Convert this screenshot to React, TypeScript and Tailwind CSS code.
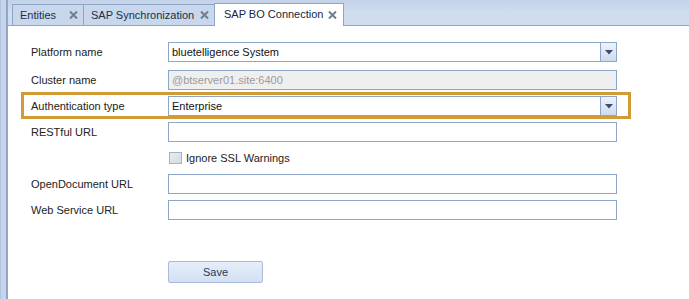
import * as React from "react";

function CloseIcon() {
  return (
    <svg width="9" height="8" viewBox="0 0 9 8" className="shrink-0">
      <path d="M1 0.5 L8 7.5 M8 0.5 L1 7.5" stroke="#6f7c91" strokeWidth="2" />
    </svg>
  );
}

function Tab({ label, width, active }: { label: string; width: string; active?: boolean }) {
  return (
    <div
      className={
        active
          ? `${width} h-[23px] -mb-px flex items-center justify-between pl-[9px] pr-[6px] bg-white border border-b-0 border-[#8da5c6] text-[#15263d]`
          : `${width} h-[21px] flex items-center justify-between pl-[7px] pr-[5px] bg-[#c8d7ec] border border-b-0 border-r-0 border-[#8da5c6] text-[#1b2f4a]`
      }
    >
      <span className={active ? "pb-px" : ""}>{label}</span>
      <CloseIcon />
    </div>
  );
}

function Arrow() {
  return (
    <svg width="8" height="5" viewBox="0 0 8 5">
      <path d="M0 0 H8 L4 4.5 Z" fill="#3e4b6b" />
    </svg>
  );
}

function TextBox({ value, dropdown, disabled }: { value?: string; dropdown?: boolean; disabled?: boolean }) {
  return (
    <div
      className={`w-[449px] h-[20px] flex items-center border border-[#8da5c6] ${
        disabled ? "bg-[#efefef] text-[#9b9b9b]" : "bg-white text-[#111]"
      }`}
    >
      <span className="flex-1 pl-[3px] truncate">{value}</span>
      {dropdown && (
        <div className="w-[16px] h-full flex items-center justify-center border-l border-[#8da5c6] bg-gradient-to-b from-[#eef3fb] to-[#cddbef]">
          <Arrow />
        </div>
      )}
    </div>
  );
}

function Row({ label, children }: { label: string; children: React.ReactNode }) {
  return (
    <div className="flex items-center h-[20px]">
      <span className="w-[137px] shrink-0 text-[#222]">{label}</span>
      {children}
    </div>
  );
}

export default function App() {
  return (
    <div className="w-[689px] h-[299px] flex bg-white overflow-hidden font-['Liberation_Sans',Arial,sans-serif] text-[11px] leading-none">
      {/* left dock strip */}
      <div className="w-[8px] shrink-0 bg-[#c5d4e9] border-l border-l-[#b3c5de] border-r-2 border-r-[#8fa6c8]" />

      <div className="flex-1 flex flex-col">
        {/* tab strip */}
        <div className="h-[26px] shrink-0 flex items-end pl-[4px] bg-gradient-to-b from-[#c3d2e7] via-[#d0ddef] to-[#d0ddef] border-b border-[#8da5c6]">
          <Tab label="Entities" width="w-[71px]" />
          <Tab label="SAP Synchronization" width="w-[131px]" />
          <Tab label="SAP BO Connection" width="w-[130px]" active />
        </div>

        {/* form */}
        <div className="flex-1 flex flex-col pl-[23px] pt-[16px]">
          <Row label="Platform name">
            <TextBox value="bluetelligence System" dropdown />
          </Row>
          <div className="mt-[8px]">
            <Row label="Cluster name">
              <TextBox value="@btserver01.site:6400" disabled />
            </Row>
          </div>
          <div className="mt-[2px] -ml-[10px] w-[610px] border-[3px] border-[#d29b38] pl-[7px] pt-[1px]">
            <Row label="Authentication type">
              <TextBox value="Enterprise" dropdown />
            </Row>
          </div>
          <div className="mt-[3px]">
            <Row label="RESTful URL">
              <TextBox />
            </Row>
          </div>
          <div className="mt-[6px] h-[20px] flex items-center pl-[138px]">
            <div className="w-[13px] h-[12px] border border-[#a3b3c9] bg-gradient-to-br from-[#e9ecf0] to-[#d6dbe2]" />
            <span className="ml-[4px] text-[#222]">Ignore SSL Warnings</span>
          </div>
          <div className="mt-[6px]">
            <Row label="OpenDocument URL">
              <TextBox />
            </Row>
          </div>
          <div className="mt-[6px]">
            <Row label="Web Service URL">
              <TextBox />
            </Row>
          </div>
          <div className="mt-[41px] pl-[137px]">
            <button className="w-[95px] h-[22px] rounded-[2px] border border-[#a9bbd8] bg-gradient-to-b from-[#e6eef9] to-[#d3e0f2] text-[#1e3a5f]">
              Save
            </button>
          </div>
        </div>
      </div>
    </div>
  );
}
